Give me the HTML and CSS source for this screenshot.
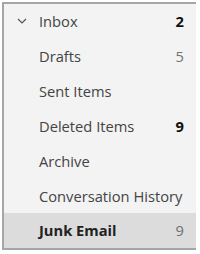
FILE: index.html
```html
<!DOCTYPE html>
<html>
<head>
<meta charset="utf-8">
<link rel="stylesheet" href="styles.css">
</head>
<body>
<div class="pane">
  <div class="row">
    <span class="chev"><svg width="10" height="6" viewBox="0 0 10 6"><path d="M1 1 L5 5 L9 1" fill="none" stroke="#555" stroke-width="1.2"/></svg></span>
    <span class="name">Inbox</span>
    <span class="count bold">2</span>
  </div>
  <div class="row"><span class="name">Drafts</span><span class="count">5</span></div>
  <div class="row"><span class="name">Sent Items</span></div>
  <div class="row"><span class="name">Deleted Items</span><span class="count bold">9</span></div>
  <div class="row"><span class="name">Archive</span></div>
  <div class="row"><span class="name">Conversation History</span></div>
  <div class="row selected"><span class="name">Junk Email</span><span class="count">9</span></div>
</div>
</body>
</html>
```
FILE: styles.css
```css
html, body { margin: 0; padding: 0; background: #ffffff; }
body { padding: 2px; width: 196px; height: 250px; box-sizing: border-box; }
.pane {
  box-sizing: border-box;
  width: 196px;
  height: 248px;
  border: 2px solid #a6a6a6;
  background: #f3f3f3;
  font-family: "Open Sans", "Noto Sans", sans-serif;
  font-size: 14.7px;
  color: #444444;
}
.row {
  position: relative;
  height: 34.85px;
  display: flex;
  align-items: center;
  padding-left: 35px;
  padding-right: 12px;
}
.chev { position: absolute; left: 13px; top: 14px; display: flex; }
.name { flex: 1; white-space: nowrap; }
.count { color: #707070; }
.count.bold { color: #111; font-weight: 700; }
.selected { background: #dcdcdc; }
.selected .name { font-weight: 700; color: #222; }
```
